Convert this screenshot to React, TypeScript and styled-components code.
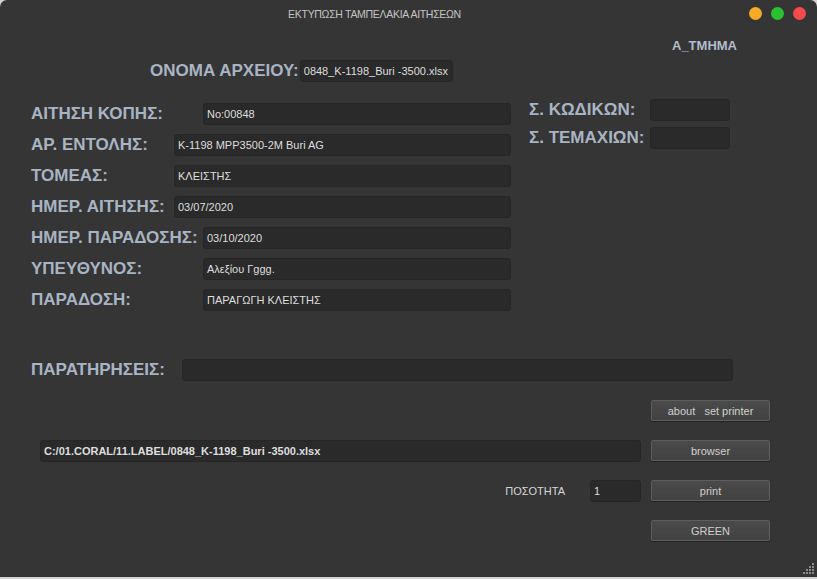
import React from "react";
import styled, { createGlobalStyle } from "styled-components";

const Global = createGlobalStyle`
  html, body { margin: 0; padding: 0; background: #d2d2d2; }
  body { width: 817px; height: 579px; overflow: hidden; font-family: "Liberation Sans", Arial, sans-serif; }
`;

const Window = styled.div`
  position: relative;
  width: 817px;
  height: 577px;
  background: #353535;
  border-radius: 7px 7px 0 0;
  display: flex;
  flex-direction: column;
  box-sizing: border-box;
  overflow: hidden;
`;

const TitleBar = styled.div`
  height: 27px;
  display: grid;
  grid-template-columns: 1fr 70px;
  align-items: center;
`;

const Title = styled.div`
  font-family: "Liberation Sans", Arial, sans-serif;
  font-size: 10.5px;
  letter-spacing: -0.3px;
  color: #c4c4c4;
  text-align: center;
  padding-left: 2px;
  margin-top: 1px;
`;

const Lights = styled.div`
  display: flex;
  gap: 9px;
  align-items: center;
  padding-left: 2px;
`;

const Light = styled.span<{ $c: string }>`
  width: 13px;
  height: 13px;
  border-radius: 50%;
  background: ${(p) => p.$c};
`;

const Body = styled.div`
  display: flex;
  flex-direction: column;
  padding-left: 31px;
`;

const Department = styled.div`
  align-self: flex-end;
  margin-right: 80px;
  margin-top: 12px;
  font-size: 13px;
  font-weight: bold;
  color: #b3bdca;
  line-height: 14px;
`;

const FileRow = styled.div`
  display: flex;
  align-items: center;
  margin-left: 119px;
  margin-top: 7px;
  gap: 1px;
`;

const Label = styled.div`
  font-family: "Liberation Sans", Arial, sans-serif;
  font-weight: bold;
  font-size: 17px;
  color: #a9b4c3;
  white-space: nowrap;
  line-height: 22px;
`;

const Field = styled.div<{ $w?: number; $bold?: boolean }>`
  box-sizing: border-box;
  height: 22px;
  ${(p) => (p.$w ? `width: ${p.$w}px;` : "")}
  background: #2a2a2a;
  border: 1px solid #262626;
  border-radius: 3px;
  padding: 0 3px;
  display: flex;
  align-items: center;
  font-size: 11px;
  font-weight: ${(p) => (p.$bold ? "bold" : "normal")};
  color: #dedede;
  white-space: nowrap;
  overflow: hidden;
`;

const FormArea = styled.div`
  display: flex;
  margin-top: 17px;
`;

const LeftCol = styled.div`
  width: 480px;
  display: flex;
  flex-direction: column;
  gap: 9px;
  padding-top: 4px;
`;

const FormRow = styled.div<{ $labelW: number }>`
  display: grid;
  grid-template-columns: ${(p) => p.$labelW}px 1fr;
  align-items: center;
`;

const RightCol = styled.div`
  margin-left: 18px;
  display: flex;
  flex-direction: column;
  gap: 6px;
`;

const SideRow = styled.div`
  display: grid;
  grid-template-columns: 121px 80px;
  align-items: center;
`;

const RemarksRow = styled.div`
  display: grid;
  grid-template-columns: 151px 551px;
  align-items: center;
  margin-top: 48px;
`;

const Bottom = styled.div`
  display: grid;
  grid-template-columns: 601px 119px;
  column-gap: 10px;
  row-gap: 19px;
  grid-auto-rows: 21px;
  margin-top: 19px;
  margin-left: 9px;
`;

const Qty = styled.div`
  display: flex;
  align-items: center;
  justify-content: flex-end;
  gap: 25px;
`;

const QtyLabel = styled.span`
  font-size: 11px;
  color: #d6d6d6;
`;

const Button = styled.button`
  grid-column: 2;
  box-sizing: border-box;
  height: 21px;
  width: 119px;
  padding: 0;
  background: linear-gradient(#4a4a4a, #424242);
  border: 1px solid #5e5e5e;
  border-radius: 2px;
  color: #d0d0d0;
  font-family: "Liberation Sans", Arial, sans-serif;
  font-size: 11px;
  box-shadow: 0 1px 1px rgba(0,0,0,0.35);
`;

const Grip = styled.svg`
  position: absolute;
  right: 2px;
  bottom: 2px;
`;

export default function App() {
  return (
    <>
      <Global />
      <Window>
        <TitleBar>
          <Title>ΕΚΤΥΠΩΣΗ ΤΑΜΠΕΛΑΚΙΑ ΑΙΤΗΣΕΩΝ</Title>
          <Lights>
            <Light $c="#f7a928" />
            <Light $c="#2ac12f" />
            <Light $c="#fb4a4c" />
          </Lights>
        </TitleBar>
        <Body>
          <Department>Α_ΤΜΗΜΑ</Department>
          <FileRow>
            <Label>ΟΝΟΜΑ ΑΡΧΕΙΟΥ:</Label>
            <Field $w={153}>0848_K-1198_Buri -3500.xlsx</Field>
          </FileRow>
          <FormArea>
            <LeftCol>
              <FormRow $labelW={172}>
                <Label>ΑΙΤΗΣΗ ΚΟΠΗΣ:</Label>
                <Field>No:00848</Field>
              </FormRow>
              <FormRow $labelW={143}>
                <Label>ΑΡ. ΕΝΤΟΛΗΣ:</Label>
                <Field>K-1198 MPP3500-2M Buri AG</Field>
              </FormRow>
              <FormRow $labelW={143}>
                <Label>ΤΟΜΕΑΣ:</Label>
                <Field>ΚΛΕΙΣΤΗΣ</Field>
              </FormRow>
              <FormRow $labelW={143}>
                <Label>ΗΜΕΡ. ΑΙΤΗΣΗΣ:</Label>
                <Field>03/07/2020</Field>
              </FormRow>
              <FormRow $labelW={172}>
                <Label>ΗΜΕΡ. ΠΑΡΑΔΟΣΗΣ:</Label>
                <Field>03/10/2020</Field>
              </FormRow>
              <FormRow $labelW={172}>
                <Label>ΥΠΕΥΘΥΝΟΣ:</Label>
                <Field>Αλεξίου Γggg.</Field>
              </FormRow>
              <FormRow $labelW={172}>
                <Label>ΠΑΡΑΔΟΣΗ:</Label>
                <Field>ΠΑΡΑΓΩΓΗ ΚΛΕΙΣΤΗΣ</Field>
              </FormRow>
            </LeftCol>
            <RightCol>
              <SideRow>
                <Label>Σ. ΚΩΔΙΚΩΝ:</Label>
                <Field />
              </SideRow>
              <SideRow>
                <Label>Σ. ΤΕΜΑΧΙΩΝ:</Label>
                <Field />
              </SideRow>
            </RightCol>
          </FormArea>
          <RemarksRow>
            <Label>ΠΑΡΑΤΗΡΗΣΕΙΣ:</Label>
            <Field />
          </RemarksRow>
          <Bottom>
            <Button>about&nbsp;&nbsp; set printer</Button>
            <Field $bold>C:/01.CORAL/11.LABEL/0848_K-1198_Buri -3500.xlsx</Field>
            <Button>browser</Button>
            <Qty>
              <QtyLabel>ΠΟΣΟΤΗΤΑ</QtyLabel>
              <Field $w={51}>1</Field>
            </Qty>
            <Button>print</Button>
            <Button>GREEN</Button>
          </Bottom>
        </Body>
        <Grip width="12" height="12" viewBox="0 0 12 12">
          {[
            [9, 0], [6, 3], [9, 3], [3, 6], [6, 6], [9, 6], [0, 9], [3, 9], [6, 9], [9, 9],
          ].map(([x, y], i) => (
            <rect key={i} x={x} y={y} width="2" height="2" fill="#8a8a8a" />
          ))}
        </Grip>
      </Window>
    </>
  );
}
